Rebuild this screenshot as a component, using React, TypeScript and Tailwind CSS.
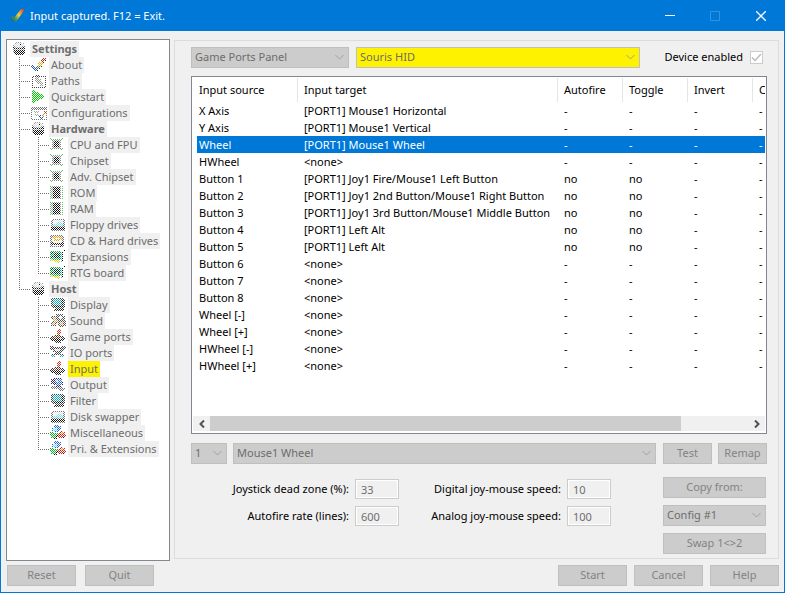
import React, { ReactNode } from 'react'
import clsx from 'clsx'

type IconName =
  | 'root'
  | 'about'
  | 'paths'
  | 'quickstart'
  | 'configurations'
  | 'cpu'
  | 'memory'
  | 'floppy'
  | 'cd'
  | 'board'
  | 'display'
  | 'sound'
  | 'joystick'
  | 'io'
  | 'output'
  | 'misc'

interface TreeEntry {
  label: string
  icon: IconName
  children?: TreeEntry[]
}

const tree: TreeEntry[] = [
  { label: 'About', icon: 'about' },
  { label: 'Paths', icon: 'paths' },
  { label: 'Quickstart', icon: 'quickstart' },
  { label: 'Configurations', icon: 'configurations' },
  {
    label: 'Hardware',
    icon: 'root',
    children: [
      { label: 'CPU and FPU', icon: 'cpu' },
      { label: 'Chipset', icon: 'cpu' },
      { label: 'Adv. Chipset', icon: 'cpu' },
      { label: 'ROM', icon: 'memory' },
      { label: 'RAM', icon: 'memory' },
      { label: 'Floppy drives', icon: 'floppy' },
      { label: 'CD & Hard drives', icon: 'cd' },
      { label: 'Expansions', icon: 'board' },
      { label: 'RTG board', icon: 'board' },
    ],
  },
  {
    label: 'Host',
    icon: 'root',
    children: [
      { label: 'Display', icon: 'display' },
      { label: 'Sound', icon: 'sound' },
      { label: 'Game ports', icon: 'joystick' },
      { label: 'IO ports', icon: 'io' },
      { label: 'Input', icon: 'joystick' },
      { label: 'Output', icon: 'output' },
      { label: 'Filter', icon: 'display' },
      { label: 'Disk swapper', icon: 'floppy' },
      { label: 'Miscellaneous', icon: 'misc' },
      { label: 'Pri. & Extensions', icon: 'misc' },
    ],
  },
]

const rows = [
  ['X Axis', '[PORT1] Mouse1 Horizontal', '-'],
  ['Y Axis', '[PORT1] Mouse1 Vertical', '-'],
  ['Wheel', '[PORT1] Mouse1 Wheel', '-'],
  ['HWheel', '<none>', '-'],
  ['Button 1', '[PORT1] Joy1 Fire/Mouse1 Left Button', 'no'],
  ['Button 2', '[PORT1] Joy1 2nd Button/Mouse1 Right Button', 'no'],
  ['Button 3', '[PORT1] Joy1 3rd Button/Mouse1 Middle Button', 'no'],
  ['Button 4', '[PORT1] Left Alt', 'no'],
  ['Button 5', '[PORT1] Left Alt', 'no'],
  ['Button 6', '<none>', '-'],
  ['Button 7', '<none>', '-'],
  ['Button 8', '<none>', '-'],
  ['Wheel [-]', '<none>', '-'],
  ['Wheel [+]', '<none>', '-'],
  ['HWheel [-]', '<none>', '-'],
  ['HWheel [+]', '<none>', '-'],
]

const shapes: Record<IconName, ReactNode> = {
  root: (
    <>
      <path fill="#999" d="M4 1h6v1h2v2h1v9h-2v1H4v-1H2v-2H1V4h1V2h2z" />
      <path fill="#ddd" d="M4 2h6v1h2v2h-2v1H4V5H2V3h2z" />
      <path fill="#111" d="M1 6h2v1h8V6h2v2H1zM2 9h11v4h-2v1H4v-1H2zM5 3h1v1H5zM8 3h1v1H8z" />
      <path fill="#00a0a0" d="M12 5h1v1h-1z" />
    </>
  ),
  about: (
    <>
      <path fill="#d02020" d="M11 1h4v3h-2v1h-3V3h1z" />
      <path fill="#f0b000" d="M8 5h4v2h-1v2H9v1H6V8h1V6h1z" />
      <path fill="#209040" d="M6 9h3v2H7v1H5v-2h1z" />
      <path fill="#2050d0" d="M0 8h3v2h2v2h1v2H3v-1H2v-2H0z" />
      <path fill="#222" d="M14 3h1v1h-1zM12 5h1v2h-1zM10 8h1v2h-1zM8 10h1v2H8zM6 12h1v2H6z" />
    </>
  ),
  paths: (
    <>
      <path fill="#444" d="M1 3h3V2h4v1h7v12H1z" />
      <path fill="#fff" d="M2 4h12v10H2z" />
      <path fill="#999" d="M4 4h4v2h2v3h2v4H9v-2H6V9H4z" />
    </>
  ),
  quickstart: <path fill="#00d000" d="M1 1h2v1h2v1h2v1h2v1h2v1h2v3h-2v1H9v1H7v1H5v1H3v1H1z" />,
  configurations: (
    <>
      <path fill="#777" d="M0 2h16v13H0z" />
      <path fill="#fff" d="M1 5h14v9H1z" />
      <path fill="#aaa" d="M3 6h5v2H3zM4 9h4v2H4z" />
      <path fill="#2050d0" d="M8 10h2v2h2v2h-2v-1H8z" />
      <path fill="#e09000" d="M11 10h2v2h-2zM12 8h2v2h-2z" />
      <path fill="#d03030" d="M13 6h2v2h-2z" />
    </>
  ),
  cpu: (
    <>
      <path fill="#60c860" d="M0 1h2v2H0zM11 1h2v2h-2zM0 11h2v2H0zM11 11h2v2h-2zM2 2h9v1H2zM2 11h9v1H2z" />
      <path fill="#888" d="M2 3h9v9H2z" />
      <path fill="#111" d="M4 4h5v6H4z" />
    </>
  ),
  memory: (
    <>
      <path fill="#60c860" d="M0 1h1v13H0zM12 1h1v13h-1z" />
      <path fill="#999" d="M1 1h10v13H1z" />
      <path fill="#111" d="M3 2h7v11H3z" />
    </>
  ),
  floppy: (
    <>
      <path fill="#777" d="M2 2h12v1h1v11H1V3h1z" />
      <path fill="#e8e8e8" d="M3 3h10v6H3z" />
      <path fill="#70e0e8" d="M7 5h5v2h1v2H3V7h4z" />
      <path fill="#111" d="M1 10h14v3H1z" />
    </>
  ),
  cd: (
    <>
      <path fill="#777" d="M1 2h12v1h1v11H0V3h1z" />
      <path fill="#eee" d="M2 4h10v9H2z" />
      <path fill="#f0a000" d="M3 3h6v1h3v3h-3v1H4V5H3z" />
      <path fill="#fff" d="M6 5h3v1H6z" />
      <path fill="#222" d="M1 9h3v1h7V9h3v3h-2v2h-2v-2H1z" />
    </>
  ),
  board: (
    <>
      <path fill="#10a840" d="M0 2h11v9H2v-1H0z" />
      <path fill="#032" d="M4 4h6v5H4zM1 3h2v2H1zM1 7h2v2H1z" />
      <path fill="#40d8e8" d="M11 3h1v10h-1z" />
      <path fill="#111" d="M12 2h1v10h-1zM13 1h3v1h-3z" />
      <path fill="#e8c800" d="M0 10h3v1h7v3H8v-1H4v-1H0z" />
    </>
  ),
  display: (
    <>
      <path fill="#444" d="M1 1h12v1h2v9h-2v1h1v2H4v-2h1v-1H2V9H1z" />
      <path fill="#00b8c0" d="M3 2h8v6H3z" />
      <path fill="#111" d="M12 2h1v8H3V9h9zM5 12h9v1H5z" />
    </>
  ),
  sound: (
    <>
      <path fill="#555" d="M1 3h5V1h7v2h2v5h1v5h-2v1H9v-2H6v1H1V9h2V6H1z" />
      <path fill="#d8a850" d="M3 4h3v3h2v2H5v3H2v-2h2V7H3zM10 9h3v3h-3z" />
      <path fill="#eee" d="M9 3h3v3H9zM6 10h2v2H6z" />
    </>
  ),
  joystick: (
    <>
      <path fill="#333" d="M0 8h2V7h3V6h6v1h2v1h2v3h-2v1h-2v2H6v-1H4v-1H2v-1H0z" />
      <path fill="#bbb" d="M5 8h2v1H5zM10 9h2v1h-2z" />
      <path fill="#111" d="M1 10h13v1h-3v2H6v-1H1z" />
      <path fill="#f03010" d="M8 0h2v1h1v3h-1v1H7V2h1zM8 5h1v4H8zM4 7h2v2H4z" />
    </>
  ),
  io: (
    <>
      <path fill="#444" d="M0 1h4v1h8V1h3v4h-2v2h-2v2h3v3h-3v-2H5v2H2V9h3V7H3V5H0z" />
      <path fill="#ddd" d="M5 4h5v2H5z" />
      <path fill="#30a8b8" d="M1 10h4v2H1zM10 10h4v2h-4z" />
      <path fill="#2060c0" d="M14 1h2v2h-2z" />
    </>
  ),
  output: (
    <>
      <path fill="#402060" d="M1 2h3V1h8v3h1v4h-2v2H6V8H3V7H1z" />
      <path fill="#2870f0" d="M5 2h7v6H6V6H5z" />
      <path fill="#a8d8ff" d="M6 3h2v2H6z" />
      <path fill="#777" d="M1 9h5v1h6v1h3v2h-2v1H9v-2H1z" />
    </>
  ),
  misc: (
    <>
      <path fill="#2060f0" d="M5 0h4v1h2v4H9v2H5V6H2V3h2V1h1z" />
      <path fill="#60e0ff" d="M3 3h4v3H3z" />
      <path fill="#10b020" d="M0 7h4v1h4v4H7v2H3v-1H1v-2H0z" />
      <path fill="#e02010" d="M10 6h3v1h2v3h1v2h-3v1H9v-1H8V8h2z" />
      <path fill="#f0a000" d="M11 7h2v2h-2z" />
      <path fill="#111" d="M6 10h2v2H6zM3 13h4v1H3zM12 12h3v1h-3z" />
    </>
  ),
}

// disabled image list entries are stippled with the background colour
const stipple = Array.from({ length: 128 }, (_, i) => {
  const y = Math.floor(i / 8)
  const x = (i % 8) * 2 + (y % 2)
  return `M${x} ${y}h1v1h-1z`
}).join('')

function TreeIcon({ name }: { name: IconName }) {
  return (
    <svg className="size-4 shrink-0" viewBox="0 0 16 16" shapeRendering="crispEdges" aria-hidden="true">
      {shapes[name]}
      <path fill="#fff" d={stipple} />
    </svg>
  )
}

function Branch({ last = false }: { last?: boolean }) {
  return (
    <svg className="w-3 h-4 shrink-0" viewBox="0 0 12 16" stroke="#707070" strokeDasharray="1 1" aria-hidden="true">
      <path d={last ? 'M.5 0v8' : 'M.5 0v16'} />
      <path d="M0 8.500h12" />
    </svg>
  )
}

// keeps the outer line going past the rows of an open group
function Rail({ visible }: { visible: boolean }) {
  return (
    <svg className="w-[19px] h-4 shrink-0" viewBox="0 0 19 16" stroke="#707070" strokeDasharray="1 1" aria-hidden="true">
      {visible && <path d="M.5 0v16" />}
    </svg>
  )
}

function TreeLabel({ children, bold, active }: { children: ReactNode; bold?: boolean; active?: boolean }) {
  return (
    <button
      type="button"
      disabled
      className={clsx(
        'h-4 px-0.5 leading-4 whitespace-nowrap text-[#6d6d6d]',
        bold && 'font-bold',
        active ? 'bg-[#fff200]' : 'bg-[#f0f0f0]'
      )}
    >
      {children}
    </button>
  )
}

function SettingsTree() {
  return (
    <nav className="w-[164px] shrink-0 border border-[#828790] bg-white pt-px" aria-label="Settings">
      <div className="flex pl-[5px] gap-0.5">
        <TreeIcon name="root" />
        <TreeLabel bold>Settings</TreeLabel>
      </div>
      <ul className="pl-3">
        {tree.map((entry, i) => {
          const last = i === tree.length - 1
          return (
            <li key={entry.label}>
              <div className="flex">
                <Branch last={last} />
                <TreeIcon name={entry.icon} />
                <span className="w-0.5" />
                <TreeLabel bold={!!entry.children}>{entry.label}</TreeLabel>
              </div>
              {entry.children && (
                <ul>
                  {entry.children.map((child, j) => (
                    <li key={child.label} className="flex">
                      <Rail visible={!last} />
                      <Branch last={j === entry.children!.length - 1} />
                      <TreeIcon name={child.icon} />
                      <span className="w-0.5" />
                      <TreeLabel active={child.label === 'Input'}>{child.label}</TreeLabel>
                    </li>
                  ))}
                </ul>
              )}
            </li>
          )
        })}
      </ul>
    </nav>
  )
}

function Select({ value, label, className }: { value: string; label: string; className?: string }) {
  return (
    <div className={clsx('relative h-[21px] border border-[#bfbfbf]', className)}>
      <select
        disabled
        aria-label={label}
        defaultValue={value}
        className="block w-full h-full pl-[3px] pr-4 appearance-none bg-transparent text-[#6d6d6d] opacity-100"
      >
        <option>{value}</option>
      </select>
      <svg
        className="absolute right-1 top-1.5 w-[9px] h-[6px] pointer-events-none"
        viewBox="0 0 9 6"
        fill="none"
        stroke="#a0a0a0"
        aria-hidden="true"
      >
        <path d="M.5 1l4 4 4-4" />
      </svg>
    </div>
  )
}

function PushButton({ children, className }: { children: ReactNode; className?: string }) {
  return (
    <button
      type="button"
      disabled
      className={clsx('h-[21px] border border-[#bfbfbf] bg-[#cccccc] text-[#838383] whitespace-nowrap', className)}
    >
      {children}
    </button>
  )
}

function NumberField({ id, label, value }: { id: string; label: string; value: string }) {
  return (
    <>
      <label htmlFor={id} className="text-right whitespace-nowrap">
        {label}
      </label>
      <input
        id={id}
        type="text"
        disabled
        defaultValue={value}
        className="w-11 h-5 pl-[5px] border border-[#cccccc] ring-1 ring-inset ring-white bg-[#f0f0f0] text-[#6d6d6d]"
      />
    </>
  )
}

function TitleBar() {
  return (
    <header className="flex items-center h-[30px] pl-2 bg-[#0078d7] text-white">
      <svg className="w-4 h-4 mr-[5px]" viewBox="0 0 16 16" fill="none" aria-hidden="true">
        <defs>
          <linearGradient id="tick" x1="0" y1="14" x2="15" y2="1" gradientUnits="userSpaceOnUse">
            <stop offset="0.1" stopColor="#2a4f9a" />
            <stop offset="0.35" stopColor="#3c9a5c" />
            <stop offset="0.6" stopColor="#f0d040" />
            <stop offset="0.8" stopColor="#f08030" />
            <stop offset="1" stopColor="#b04040" />
          </linearGradient>
        </defs>
        <path fill="url(#tick)" d="M1 9l3-1 1 2L12 1h4L7 14H4z" />
      </svg>
      <h1 className="flex-1">Input captured. F12 = Exit.</h1>
      <button type="button" aria-label="Minimize" className="flex items-center justify-center w-[45px] h-full">
        <svg width="10" height="10" viewBox="0 0 10 10" stroke="#fff" aria-hidden="true">
          <path d="M0 4.500h10" />
        </svg>
      </button>
      <button type="button" aria-label="Maximize" disabled className="flex items-center justify-center w-[45px] h-full">
        <svg width="10" height="10" viewBox="0 0 10 10" fill="none" stroke="#3393df" aria-hidden="true">
          <path d="M.5.5h9v9h-9z" />
        </svg>
      </button>
      <button type="button" aria-label="Close" className="flex items-center justify-center w-[47px] h-full">
        <svg width="10" height="10" viewBox="0 0 10 10" stroke="#fff" strokeWidth="1.300" aria-hidden="true">
          <path d="M0 0l10 10M10 0L0 10" />
        </svg>
      </button>
    </header>
  )
}

function MappingList() {
  return (
    <div className="flex flex-col flex-1 mt-2 border border-[#828790] bg-white">
      <div className="flex-1 pl-[5px] pr-px pt-px overflow-hidden">
        <table className="w-full table-fixed border-separate border-spacing-0 text-left">
          <colgroup>
            <col className="w-[101px]" />
            <col className="w-[260px]" />
            <col className="w-[65px]" />
            <col className="w-[65px]" />
            <col className="w-[65px]" />
            <col />
          </colgroup>
          <thead>
            <tr className="h-6">
              {['Input source', 'Input target', 'Autofire', 'Toggle', 'Invert', 'C'].map((title, i) => (
                <th
                  key={title}
                  scope="col"
                  className={clsx(
                    'p-0 font-normal whitespace-nowrap overflow-hidden',
                    i === 0 ? 'pl-0.5' : 'pl-1.5',
                    i < 5 && 'border-r border-[#e5e5e5]'
                  )}
                >
                  {title}
                </th>
              ))}
            </tr>
          </thead>
          <tbody>
            {rows.map(([source, target, flag]) => (
              <tr key={source} className={clsx('h-[17px] leading-4', source === 'Wheel' && 'bg-[#0078d7] text-white')}>
                <td className="p-0 pl-0.5 whitespace-nowrap">{source}</td>
                <td className="p-0 pl-1.5 whitespace-nowrap">{target}</td>
                <td className="p-0 pl-1.5">{flag}</td>
                <td className="p-0 pl-1.5">{flag}</td>
                <td className="p-0 pl-1.5">-</td>
                <td className="p-0 pl-1.5 overflow-hidden">-</td>
              </tr>
            ))}
          </tbody>
        </table>
      </div>
      <div className="flex h-[15px] mx-px mb-0.5 bg-[#f0f0f0]">
        <button type="button" aria-label="Scroll left" className="flex items-center justify-center w-[17px]">
          <svg width="6" height="8" viewBox="0 0 6 8" fill="none" stroke="#505050" strokeWidth="2" aria-hidden="true">
            <path d="M5 .5L1.500 4 5 7.500" />
          </svg>
        </button>
        <div className="flex-1">
          <div className="w-7/8 h-full bg-[#cdcdcd]" />
        </div>
        <button type="button" aria-label="Scroll right" className="flex items-center justify-center w-[17px]">
          <svg width="6" height="8" viewBox="0 0 6 8" fill="none" stroke="#505050" strokeWidth="2" aria-hidden="true">
            <path d="M1 .5L4.500 4 1 7.500" />
          </svg>
        </button>
      </div>
    </div>
  )
}

export default function App() {
  return (
    <div className="flex flex-col min-h-screen border border-[#0078d7] bg-[#f0f0f0] font-['Noto_Sans','Open_Sans',sans-serif] text-[11px] text-black">
      <TitleBar />
      <main className="flex flex-1 pt-2 px-[5px] gap-1">
        <SettingsTree />
        <section className="flex flex-col flex-1 mt-px mb-0.5 border border-[#dcdcdc] pl-4 pr-[11px] pt-1.5 pb-1">
          <div className="flex items-center">
            <Select label="Panel" value="Game Ports Panel" className="w-[158px] bg-[#cccccc]" />
            <Select label="Device" value="Souris HID" className="flex-1 ml-[7px] bg-[#fff200]" />
            <label className="flex items-center gap-[7px] ml-6 mr-1 whitespace-nowrap">
              Device enabled
              <span className="relative flex">
                <input
                  type="checkbox"
                  disabled
                  defaultChecked
                  className="size-[13px] appearance-none border border-[#cccccc] bg-white"
                />
                <svg
                  className="absolute inset-0 size-[13px] pointer-events-none"
                  viewBox="0 0 13 13"
                  fill="none"
                  stroke="#bcbcbc"
                  aria-hidden="true"
                >
                  <path d="M2 6.500l3 3 6-6.500" strokeWidth="1.500" />
                </svg>
              </span>
            </label>
          </div>

          <MappingList />

          <div className="flex items-center mt-[9px] gap-1.5">
            <Select label="Sub event" value="1" className="w-9 bg-[#cccccc]" />
            <Select label="Target event" value="Mouse1 Wheel" className="flex-1 mr-px bg-[#cccccc]" />
            <PushButton className="w-[49px]">Test</PushButton>
            <PushButton className="w-[49px]">Remap</PushButton>
          </div>

          <div className="flex justify-between pt-[13px] pr-px">
            <div className="grid grid-cols-[158px_44px_156px_44px] auto-rows-[20px] items-center gap-x-[6px] gap-y-[7px] pt-0.5">
              <NumberField id="dead-zone" label="Joystick dead zone (%):" value="33" />
              <NumberField id="digital-speed" label="Digital joy-mouse speed:" value="10" />
              <NumberField id="autofire-rate" label="Autofire rate (lines):" value="600" />
              <NumberField id="analog-speed" label="Analog joy-mouse speed:" value="100" />
            </div>
            <div className="flex flex-col w-[103px] gap-[7px]">
              <PushButton>Copy from:</PushButton>
              <Select label="Configuration" value="Config #1" className="bg-[#cccccc]" />
              <PushButton>{'Swap 1<>2'}</PushButton>
            </div>
          </div>
        </section>
      </main>
      <footer className="flex justify-between pl-1.5 pr-[5px] pt-1 pb-1.5">
        <div className="flex gap-[9px]">
          <PushButton className="w-[69px]">Reset</PushButton>
          <PushButton className="w-[69px]">Quit</PushButton>
        </div>
        <div className="flex gap-[7px]">
          <PushButton className="w-[69px]">Start</PushButton>
          <PushButton className="w-[69px]">Cancel</PushButton>
          <PushButton className="w-[69px]">Help</PushButton>
        </div>
      </footer>
    </div>
  )
}
